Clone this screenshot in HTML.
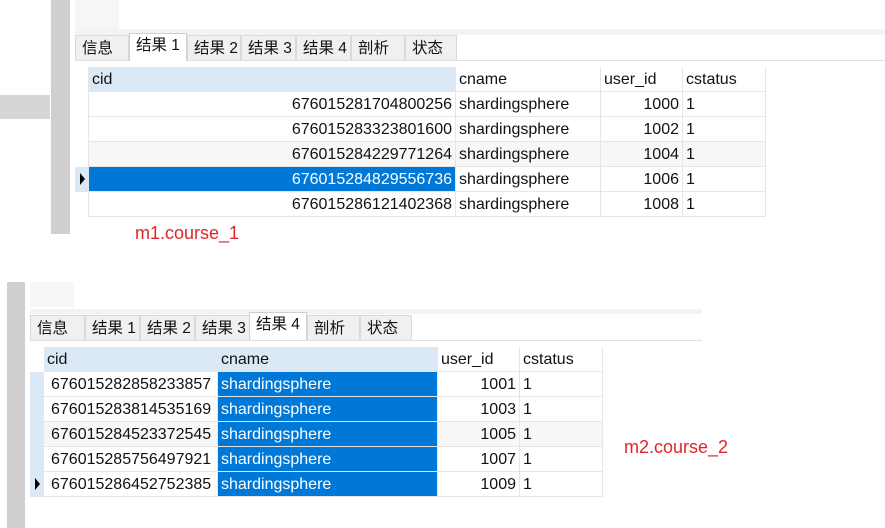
<!DOCTYPE html>
<html><head><meta charset="utf-8"><style>
*{margin:0;padding:0;box-sizing:border-box}
body{width:885px;height:528px;background:#fff;position:relative;overflow:hidden;font-family:"Liberation Sans","Noto Sans CJK SC",sans-serif;font-size:16px;color:#111}
.a{position:absolute}
.tab{position:absolute;height:25px;background:#f0f0f0;border:1px solid #d9d9d9;border-bottom:none;line-height:25px;padding-left:6px;font-size:15.5px;white-space:nowrap}
.tab.on{background:#fff;height:28px;line-height:24px;border-color:#d0d0d0}
.c{position:absolute;height:25px;line-height:25px;border-right:1px solid #e6e6e6;border-bottom:1px solid #e6e6e6;padding:0 3px;white-space:nowrap;overflow:hidden}
.h{background:#dbe9f7}
.r{text-align:right}
.sel{background:#0078d7;color:#fff}
.red{color:#e0252a;font-size:18px}
</style></head><body>
<!-- top block -->
<div class="a" style="left:51px;top:0;width:19px;height:234px;background:#cfcfcf"></div>
<div class="a" style="left:0;top:95px;width:50px;height:24px;background:#d6d6d6"></div>
<div class="a" style="left:75px;top:0;width:44px;height:29px;background:#f6f6f6"></div>
<div class="a" style="left:75px;top:29px;width:810px;height:6px;background:#f3f3f3"></div>
<div class="a" style="left:75px;top:35px;width:810px;height:25px;background:#fff"></div>
<div class="a" style="left:75px;top:60px;width:810px;height:1px;background:#e0e0e0"></div>
<div class="tab" style="left:75px;top:35px;width:54px">信息</div>
<div class="tab on" style="left:129px;top:33px;width:58px">结果 1</div>
<div class="tab" style="left:187px;top:35px;width:54px">结果 2</div>
<div class="tab" style="left:241px;top:35px;width:55px">结果 3</div>
<div class="tab" style="left:296px;top:35px;width:55px">结果 4</div>
<div class="tab" style="left:351px;top:35px;width:54px">剖析</div>
<div class="tab" style="left:405px;top:35px;width:52px">状态</div>

<div class="a" style="left:75px;top:67px;width:14px;height:150px;border-right:1px solid #e6e6e6"></div>
<div class="a" style="left:75px;top:167px;width:14px;height:25px;background:#dbe9f7"></div>
<div class="a" style="left:80px;top:173px;width:0;height:0;border-left:5px solid #000;border-top:6px solid transparent;border-bottom:6px solid transparent"></div>
<div class="c h" style="left:89px;top:67px;width:367px">cid</div>
<div class="c" style="left:456px;top:67px;width:145px">cname</div>
<div class="c" style="left:601px;top:67px;width:82px">user_id</div>
<div class="c" style="left:683px;top:67px;width:83px">cstatus</div>
<div class="c r" style="left:89px;top:92px;width:367px">676015281704800256</div><div class="c" style="left:456px;top:92px;width:145px">shardingsphere</div><div class="c r" style="left:601px;top:92px;width:82px">1000</div><div class="c" style="left:683px;top:92px;width:83px">1</div>
<div class="c r" style="left:89px;top:117px;width:367px">676015283323801600</div><div class="c" style="left:456px;top:117px;width:145px">shardingsphere</div><div class="c r" style="left:601px;top:117px;width:82px">1002</div><div class="c" style="left:683px;top:117px;width:83px">1</div>
<div class="c r" style="left:89px;top:142px;width:367px;background:#f7f7f7">676015284229771264</div><div class="c" style="left:456px;top:142px;width:145px;background:#f7f7f7">shardingsphere</div><div class="c r" style="left:601px;top:142px;width:82px;background:#f7f7f7">1004</div><div class="c" style="left:683px;top:142px;width:83px;background:#f7f7f7">1</div>
<div class="c r sel" style="left:89px;top:167px;width:367px">676015284829556736</div><div class="c" style="left:456px;top:167px;width:145px">shardingsphere</div><div class="c r" style="left:601px;top:167px;width:82px">1006</div><div class="c" style="left:683px;top:167px;width:83px">1</div>
<div class="c r" style="left:89px;top:192px;width:367px">676015286121402368</div><div class="c" style="left:456px;top:192px;width:145px">shardingsphere</div><div class="c r" style="left:601px;top:192px;width:82px">1008</div><div class="c" style="left:683px;top:192px;width:83px">1</div>
<div class="a red" style="left:135px;top:223px">m1.course_1</div>

<!-- bottom block -->
<div class="a" style="left:7px;top:282px;width:18px;height:246px;background:#cfcfcf"></div>
<div class="a" style="left:30px;top:282px;width:44px;height:25px;background:#f6f6f6"></div>
<div class="a" style="left:30px;top:309px;width:672px;height:5px;background:#f3f3f3"></div>
<div class="a" style="left:30px;top:340px;width:672px;height:1px;background:#e0e0e0"></div>
<div class="tab" style="left:30px;top:315px;width:55px">信息</div>
<div class="tab" style="left:85px;top:315px;width:55px">结果 1</div>
<div class="tab" style="left:140px;top:315px;width:55px">结果 2</div>
<div class="tab" style="left:195px;top:315px;width:55px">结果 3</div>
<div class="tab on" style="left:249px;top:312px;width:58px">结果 4</div>
<div class="tab" style="left:307px;top:315px;width:53px">剖析</div>
<div class="tab" style="left:360px;top:315px;width:52px">状态</div>

<div class="a" style="left:30px;top:372px;width:14px;height:125px;background:#dbe9f7;border-right:1px solid #e6e6e6"></div>
<div class="a" style="left:35px;top:478px;width:0;height:0;border-left:5px solid #000;border-top:6px solid transparent;border-bottom:6px solid transparent"></div>
<div class="c h" style="left:44px;top:347px;width:174px">cid</div>
<div class="c h" style="left:218px;top:347px;width:220px">cname</div>
<div class="c" style="left:438px;top:347px;width:82px">user_id</div>
<div class="c" style="left:520px;top:347px;width:83px">cstatus</div>
<div class="c" style="left:44px;top:372px;width:174px;padding-left:7px">676015282858233857</div><div class="c sel" style="left:218px;top:372px;width:220px">shardingsphere</div><div class="c r" style="left:438px;top:372px;width:82px">1001</div><div class="c" style="left:520px;top:372px;width:83px">1</div>
<div class="c" style="left:44px;top:397px;width:174px;padding-left:7px">676015283814535169</div><div class="c sel" style="left:218px;top:397px;width:220px">shardingsphere</div><div class="c r" style="left:438px;top:397px;width:82px">1003</div><div class="c" style="left:520px;top:397px;width:83px">1</div>
<div class="c" style="left:44px;top:422px;width:174px;padding-left:7px;background:#f7f7f7">676015284523372545</div><div class="c sel" style="left:218px;top:422px;width:220px">shardingsphere</div><div class="c r" style="left:438px;top:422px;width:82px;background:#f7f7f7">1005</div><div class="c" style="left:520px;top:422px;width:83px;background:#f7f7f7">1</div>
<div class="c" style="left:44px;top:447px;width:174px;padding-left:7px">676015285756497921</div><div class="c sel" style="left:218px;top:447px;width:220px">shardingsphere</div><div class="c r" style="left:438px;top:447px;width:82px">1007</div><div class="c" style="left:520px;top:447px;width:83px">1</div>
<div class="c" style="left:44px;top:472px;width:174px;padding-left:7px">676015286452752385</div><div class="c sel" style="left:218px;top:472px;width:220px">shardingsphere</div><div class="c r" style="left:438px;top:472px;width:82px">1009</div><div class="c" style="left:520px;top:472px;width:83px">1</div>
<div class="a red" style="left:624px;top:437px">m2.course_2</div>
</body></html>
